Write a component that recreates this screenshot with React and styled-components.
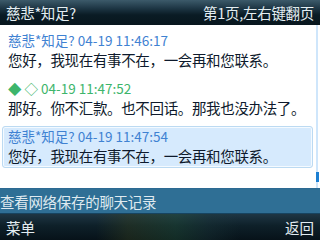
import React from "react";
import styled, { createGlobalStyle } from "styled-components";

const Global = createGlobalStyle`
  html, body { margin: 0; padding: 0; }
  body {
    width: 320px;
    height: 240px;
    overflow: hidden;
    font-family: "Noto Sans CJK SC", "DejaVu Sans", sans-serif;
  }
`;

const Screen = styled.div`
  width: 320px;
  height: 240px;
  display: flex;
  flex-direction: column;
  background: #fff;
`;

const TitleBar = styled.div`
  height: 25px;
  flex: none;
  display: flex;
  align-items: center;
  justify-content: space-between;
  padding: 0 6px;
  background: linear-gradient(#3c5a6a 0%, #1c3442 35%, #0a1b24 60%, #08161e 100%);
  color: #e4eef2;
  font-size: 14.5px;
  letter-spacing: -0.3px;
`;

const Body = styled.div`
  flex: 1;
  display: flex;
  position: relative;
  border-bottom: 1px solid #2d6a93;
`;

const List = styled.div`
  flex: 1;
  display: flex;
  flex-direction: column;
  padding: 5px 3px 0 2px;
`;

const Message = styled.div`
  padding: 0 5px 1px;
  margin-bottom: 6px;
  border-radius: 3px;
  border: 1px solid ${(p) => (p.selected ? "#bcdaf2" : "transparent")};
  background: ${(p) => (p.selected ? "#d6eafd" : "transparent")};
  box-shadow: ${(p) => (p.selected ? "inset 0 0 0 1px #f4faff" : "none")};
`;

const Header = styled.div`
  font-size: 13.5px;
  line-height: 18px;
  color: ${(p) => (p.mine ? "#3db56b" : "#3f82d2")};
  white-space: nowrap;
`;

const Text = styled.div`
  font-size: 14.5px;
  line-height: 21px;
  color: #0e1a2c;
  white-space: nowrap;
  letter-spacing: -0.35px;
`;

const Scroll = styled.div`
  width: 3px;
  flex: none;
  margin-right: 1px;
  background: linear-gradient(90deg, #cfe6fb 0 2px, #fff 2px);
  position: relative;
`;

const Thumb = styled.div`
  position: absolute;
  left: 0;
  right: 0;
  bottom: 6px;
  height: 10px;
  background: #1c7fd2;
`;

const LinkStrip = styled.div`
  height: 24px;
  flex: none;
  display: flex;
  align-items: center;
  background: #2f6f95;
  color: #dfeaf0;
  font-size: 14.5px;
  letter-spacing: -0.3px;
  border-bottom: 1px solid #174460;
`;

const SoftBar = styled.div`
  height: 26px;
  flex: none;
  display: flex;
  align-items: center;
  justify-content: space-between;
  padding: 0 6px;
  color: #e2ecf0;
  font-size: 14.5px;
  background:
    linear-gradient(90deg, transparent 30%, rgba(60, 70, 30, 0.35) 40%, rgba(40, 90, 60, 0.35) 55%, rgba(30, 60, 60, 0.3) 65%, transparent 75%),
    linear-gradient(#1e3644 0%, #0e2029 45%, #071219 100%);
`;

const messages = [
  { who: "慈悲*知足?", time: "04-19 11:46:17", text: "您好，我现在有事不在，一会再和您联系。" },
  { mine: true, time: "04-19 11:47:52", text: "那好。你不汇款。也不回话。那我也没办法了。" },
  { who: "慈悲*知足?", time: "04-19 11:47:54", text: "您好，我现在有事不在，一会再和您联系。", selected: true },
];

export default function App() {
  return (
    <Screen>
      <Global />
      <TitleBar>
        <span>慈悲*知足?</span>
        <span>第1页,左右键翻页</span>
      </TitleBar>
      <Body>
        <List>
          {messages.map((m, i) => (
            <Message key={i} selected={m.selected}>
              <Header mine={m.mine}>
                {m.mine ? "◆ ◇ " : m.who + " "}
                {m.time}
              </Header>
              <Text>{m.text}</Text>
            </Message>
          ))}
        </List>
        <Scroll>
          <Thumb />
        </Scroll>
      </Body>
      <LinkStrip>查看网络保存的聊天记录</LinkStrip>
      <SoftBar>
        <span>菜单</span>
        <span>返回</span>
      </SoftBar>
    </Screen>
  );
}
